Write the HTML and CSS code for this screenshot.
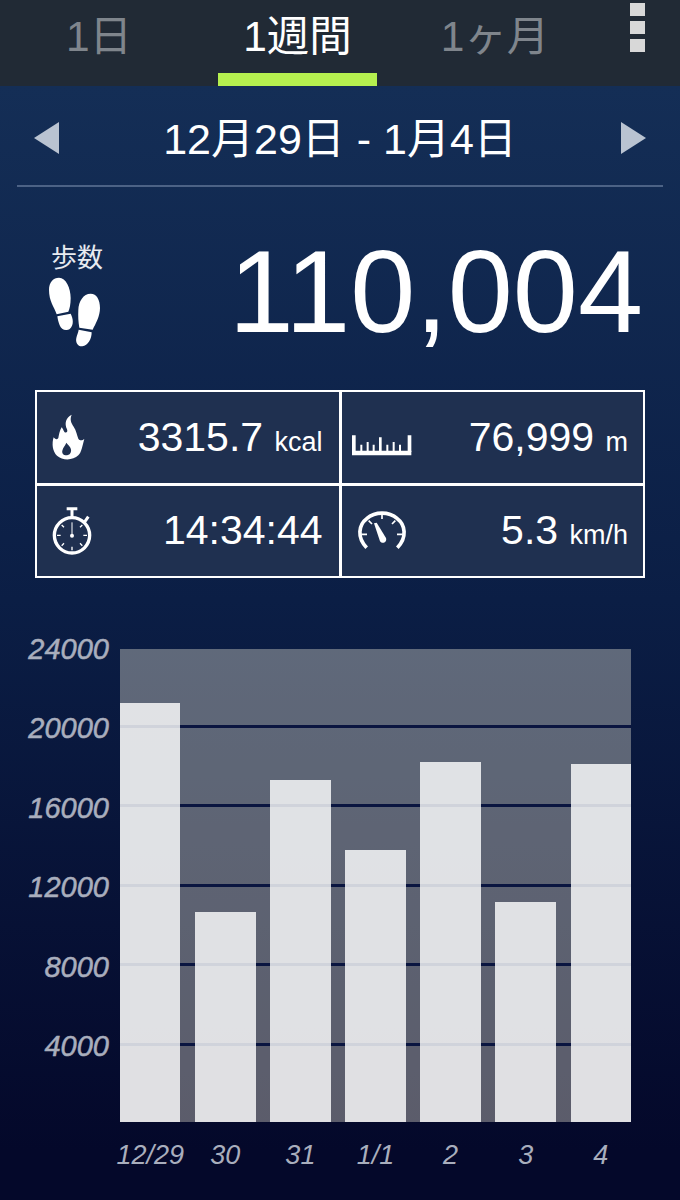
FILE: index.html
```html
<!DOCTYPE html>
<html lang="ja">

<head>
    <meta charset="UTF-8">
    <meta name="viewport" content="width=device-width, initial-scale=1.0">
    <title>歩数 1週間</title>
    <link rel="stylesheet" href="styles.css">
</head>

<body>
    <header class="tabs">
        <div class="tab">1日</div>
        <div class="tab active">1週間</div>
        <div class="tab">1ヶ月</div>
        <div class="menu"><span></span><span></span><span></span></div>
    </header>

    <div class="dateRow">
        <svg class="arrow" viewBox="0 0 25 32"><path d="M25 0V32L0 16Z" /></svg>
        <div class="dateText">12月29日 - 1月4日</div>
        <svg class="arrow" viewBox="0 0 25 32"><path d="M0 0V32L25 16Z" /></svg>
    </div>

    <section class="steps">
        <div class="stepsLabel">
            <div class="stepsTitle">歩数</div>
            <svg class="feet" viewBox="0 0 186 234">
                <path d="M45 14C66 14 80 45 80 75C80 95 77 108 73 116L38 124C30 100 15 85 15 50C15 28 28 14 45 14Z" />
                <path d="M40 130L80 122C88 138 90 155 78 167C66 176 52 170 47 157C43 147 41 138 40 130Z" />
                <path d="M140 62C158 62 168 80 168 105C168 130 155 152 146 170L106 164C103 145 102 130 103 110C104 85 118 62 140 62Z" />
                <path d="M104 170L143 178C143 198 132 218 115 220C101 221 94 208 97 195C99 185 103 178 104 170Z" />
            </svg>
        </div>
        <div class="stepsCount">110,004</div>
    </section>

    <section class="stats">
        <div class="cell fireCell">
            <svg class="fire" viewBox="0 0 150 165">
                <path fill-rule="evenodd" d="M80 14C62 24 58 40 66 58C70 68 60 72 56 62C54 58 52 54 50 52C44 62 42 74 40 84C36 90 30 88 26 82C20 100 22 125 36 137C52 152 84 152 100 136C110 126 112 108 118 86C112 92 104 92 100 86C96 76 94 62 86 50C78 38 74 28 80 14ZM64 98C72 108 80 114 78 124C76 134 70 136 64 136C56 136 50 130 52 122C54 112 60 108 64 98Z" />
            </svg>
            <div class="value">3315.7 <span class="unit">kcal</span></div>
        </div>
        <div class="cell rulerCell">
            <svg class="ruler" viewBox="0 0 204 108">
                <path d="M12 68H190V82H12Z" />
                <path d="M12 22H23V72H12ZM179 22H190V72H179ZM93 28H101V72H93Z" />
                <path d="M37 50H43V72H37ZM56 42H62V72H56ZM74 50H80V72H74ZM115 50H121V72H115ZM134 42H140V72H134ZM153 50H159V72H153Z" />
            </svg>
            <div class="value">76,999 <span class="unit">m</span></div>
        </div>
        <div class="cell watchCell">
            <svg class="watch" viewBox="0 0 165 165">
                <g fill="none" stroke="#fff">
                    <circle cx="81" cy="97" r="53" stroke-width="10" />
                    <path d="M81 42V18M65 17H97M118 58L130 41" stroke-width="9" />
                    <path d="M81 58V97" stroke-width="3" />
                    <path d="M36 97H47M115 97H126M81 131V142M50 66L57 73M112 66L105 73M50 128L57 121M112 128L105 121" stroke-width="4" />
                </g>
                <circle cx="81" cy="98" r="6" />
            </svg>
            <div class="value">14:34:44</div>
        </div>
        <div class="cell gaugeCell">
            <svg class="gauge" viewBox="0 0 180 150">
                <path d="M44 131C14 100 20 62 44 44C70 22 110 22 136 44C160 62 166 100 136 131" fill="none" stroke="#fff" stroke-width="11" />
                <path d="M90 28V45M50 50L60 60M130 50L120 60M28 91H45M152 91H135" stroke="#fff" stroke-width="5" />
                <path d="M66 58L74 56L102 102C106 114 92 122 84 112Z" />
            </svg>
            <div class="value">5.3 <span class="unit">km/h</span></div>
        </div>
    </section>

    <section class="chart">
        <div class="yAxis">
            <div>24000</div>
            <div>20000</div>
            <div>16000</div>
            <div>12000</div>
            <div>8000</div>
            <div>4000</div>
        </div>
        <div class="plot">
            <div class="gridLines">
                <span></span><span></span><span></span><span></span><span></span>
            </div>
            <div class="bar" style="height: 419px"></div>
            <div class="bar" style="height: 210px"></div>
            <div class="bar" style="height: 342px"></div>
            <div class="bar" style="height: 272px"></div>
            <div class="bar" style="height: 360px"></div>
            <div class="bar" style="height: 220px"></div>
            <div class="bar" style="height: 358px"></div>
        </div>
        <div class="xAxis">
            <div>12/29</div>
            <div>30</div>
            <div>31</div>
            <div>1/1</div>
            <div>2</div>
            <div>3</div>
            <div>4</div>
        </div>
    </section>
</body>

</html>
```

FILE: styles.css
```css
body {
    margin: 0;
    width: 680px;
    height: 1200px;
    overflow: hidden;
    font-family: "Liberation Sans", "Noto Sans CJK JP", sans-serif;
    color: #fff;
    background: linear-gradient(#142e56 86px, #0b1e45 600px, #04082a 1150px);
}

.tabs {
    display: grid;
    grid-template-columns: 198px 198px 198px 1fr;
    height: 86px;
    background-color: #212a35;
}

.tab {
    display: flex;
    justify-content: center;
    padding-top: 13px;
    font-size: 42.5px;
    line-height: 48px;
    color: #7f858c;
}

.tab.active {
    color: #fff;
    box-shadow: inset 0 -13px 0 #b5f04f;
    margin: 0 19px 0 20px;
}

.menu {
    display: flex;
    flex-direction: column;
    gap: 5px;
    padding: 3px 0 0 36px;
}

.menu span {
    width: 15px;
    height: 13px;
    background-color: #d8d8d8;
}

.dateRow {
    display: flex;
    justify-content: space-between;
    align-items: center;
    height: 95px;
    margin: 0 17px;
    padding: 4px 17px 0;
    border-bottom: 2px solid #4c6285;
}

.arrow {
    width: 25px;
    height: 32px;
    fill: #b9c3d1;
}

.dateText {
    margin-top: -5px;
    font-size: 43px;
}

.steps {
    display: flex;
    justify-content: space-between;
    align-items: center;
    height: 203px;
    padding: 0 37px 0 44px;
}

.stepsLabel {
    margin-top: 16px;
}

.stepsTitle {
    padding-left: 4px;
    font-size: 26px;
    line-height: 30px;
    text-align: center;
    color: #e8ebf0;
}

.feet {
    display: block;
    width: 62px;
    height: 78px;
    fill: #fff;
}

.stepsCount {
    margin-top: 5px;
    font-size: 117px;
}

.stats {
    display: grid;
    grid-template-columns: 1fr 1fr;
    grid-template-rows: 1fr 1fr;
    gap: 3px;
    width: 610px;
    height: 188px;
    margin-left: 35px;
    box-sizing: border-box;
    border: 2px solid #fff;
    background-color: #fff;
}

.cell {
    display: flex;
    justify-content: space-between;
    align-items: center;
    padding-right: 16px;
    background-color: #1f3050;
}

.cell svg {
    fill: #fff;
}

.fireCell {
    padding-left: 8px;
}

.fire {
    width: 50px;
    height: 55px;
}

.rulerCell {
    padding-left: 6px;
    padding-right: 15px;
}

.ruler {
    width: 68px;
    height: 36px;
    margin-top: 17px;
}

.watchCell {
    padding-left: 8px;
}

.watch {
    width: 55px;
    height: 55px;
}

.gaugeCell {
    padding-left: 10px;
    padding-right: 15px;
}

.gauge {
    width: 60px;
    height: 50px;
    margin-bottom: 3px;
}

.value {
    font-size: 41px;
}

.unit {
    font-size: 27px;
}

.chart {
    display: grid;
    grid-template-columns: 120px 511px;
    margin-top: 71px;
}

.yAxis {
    margin-top: -39px;
    padding-right: 11px;
    font-size: 29px;
    font-style: italic;
    text-align: right;
    color: #a9aebd;
    -webkit-text-stroke: 0.5px #a9aebd;
}

.yAxis div {
    height: 79.4px;
    line-height: 79.4px;
}

.plot {
    position: relative;
    display: flex;
    align-items: flex-end;
    gap: 14.7px;
    height: 473px;
    background-color: rgba(255, 250, 225, 0.35);
}

.gridLines {
    position: absolute;
    top: 76px;
    left: 0;
    right: 0;
    display: flex;
    flex-direction: column;
    gap: 76.4px;
}

.gridLines span {
    height: 3px;
    background-color: #0a1540;
}

.bar {
    position: relative;
    flex: 1;
    background-color: rgba(255, 255, 255, 0.81);
}

.xAxis {
    grid-column: 2;
    display: flex;
    gap: 14.7px;
    margin-top: 18px;
    font-size: 27px;
    font-style: italic;
    color: #a9aebd;
}

.xAxis div {
    flex: 1;
    min-width: 0;
    display: flex;
    justify-content: center;
    white-space: nowrap;
}
```
